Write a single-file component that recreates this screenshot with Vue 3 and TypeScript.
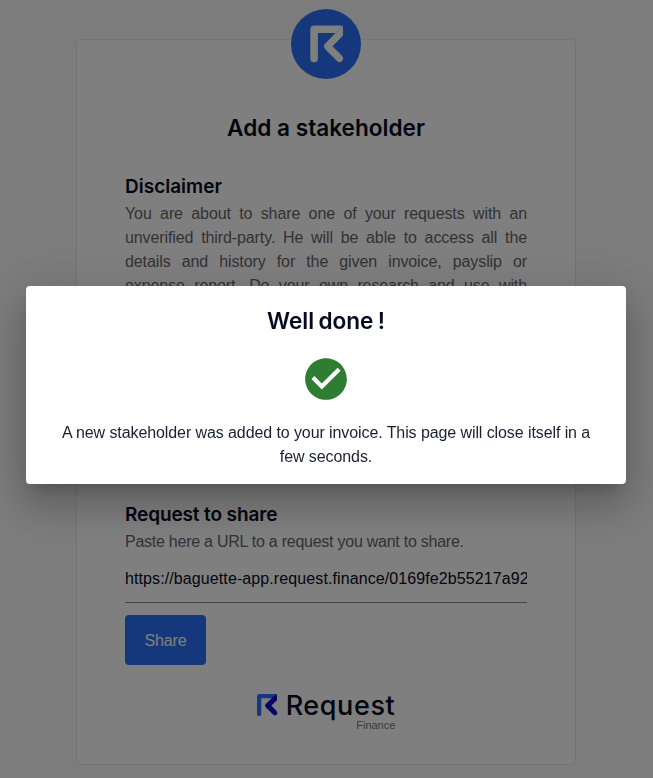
<script setup lang="ts">
import { ref } from 'vue'

const requestUrl = ref<string>('https://baguette-app.request.finance/0169fe2b55217a92')
</script>

<template>
  <div class="page">
    <main class="card">
      <svg class="badge" viewBox="0 0 70 70" aria-hidden="true">
        <circle cx="35" cy="35" r="35" fill="#2b6ff6" />
        <path d="M19.3 49.6V20.6Q19.3 16.5 23.4 16.5H50Q52 16.5 52 18.5L45 24H26.9V49.6A3.8 3.8 0 0 1 19.3 49.6Z" fill="#fff" />
        <path d="M52 17.5V25.6Q52 26.8 51.2 27.6L41.5 37.2L51 46.8C54.4 50.2 49.6 55.5 46 52L34.5 40.5Q31.5 37.3 34.5 34.2L44.8 23.8Z" fill="#fff" />
        <path d="M44.6 24L51.8 16.9" stroke="#9db9f5" stroke-width=".6" />
      </svg>
      <h1>Add a stakeholder</h1>
      <section class="disclaimer">
        <h2>Disclaimer</h2>
        <p>
          <span class="line">You are about to share one of your requests with an</span>
          <span class="line">unverified third-party. He will be able to access all the</span>
          <span class="line">details and history for the given invoice, payslip or</span>
          <span class="line">expense report. Do your own research and use with</span>
        </p>
      </section>
      <section class="share">
        <h2 class="tight">Request to share</h2>
        <p class="hint">Paste here a URL to a request you want to share.</p>
        <div class="field">{{ requestUrl }}</div>
        <button class="submit" type="button">Share</button>
      </section>
      <footer class="brand">
        <svg class="mark" viewBox="0 0 21 22" aria-hidden="true">
          <path d="M0 20V2.2Q0 0 2.2 0H20L16 4.2H4.3V20A2.1 2.1 0 0 1 0 20Z" fill="#2b6ff6" />
          <path d="M20 0V6.2L14.4 11.6L19.3 16.7C22 19.5 18.7 23.2 16 20.5L9 13.5Q7.1 11.6 9 9.7L15.7 3.3Z" fill="#0a0acb" />
        </svg>
        <div class="words">
          <span class="name">Request</span>
          <span class="sub">Finance</span>
        </div>
      </footer>
    </main>
    <div class="overlay">
      <div class="dialog" role="dialog">
        <h2>Well done !</h2>
        <svg class="check" viewBox="0 0 24 24" aria-hidden="true">
          <path fill="#2e7d32" d="M12 2C6.48 2 2 6.48 2 12s4.48 10 10 10 10-4.48 10-10S17.52 2 12 2zm-2 15-5-5 1.41-1.41L10 14.17l7.59-7.59L19 8l-9 9z" />
        </svg>
        <p>A new stakeholder was added to your invoice. This page will close itself in a<br />few seconds.</p>
      </div>
    </div>
  </div>
</template>

<style>
body { margin: 0; }
</style>

<style scoped>
.page {
  box-sizing: border-box;
  height: 778px;
  padding-top: 39px;
  display: flex;
  justify-content: center;
  align-items: flex-start;
  background: #f9f9f9;
  font-family: "Liberation Sans", Arial, sans-serif;
  font-size: 16px;
  line-height: 24px;
  color: #050b20;
  overflow: hidden;
}
h1, h2, p { margin: 0; }
h1, h2 { font-family: Inter, sans-serif; font-weight: 600; }
.card {
  box-sizing: border-box;
  width: 500px;
  height: 726px;
  margin-right: 1px;
  padding: 0 48px;
  display: flex;
  flex-direction: column;
  border: 1px solid #e8e8e8;
  border-radius: 5px;
  background: #fff;
}
.badge {
  width: 70px;
  height: 70px;
  margin-top: -31px;
  align-self: center;
}
h1 {
  margin-top: 33px;
  font-size: 22.6px;
  line-height: 32px;
  text-align: center;
  white-space: nowrap;
}
.disclaimer {
  margin-top: 28px;
  height: 328px;
}
.card h2 {
  font-size: 19px;
  line-height: 30px;
}
.card h2.tight { letter-spacing: -0.12px; }
.disclaimer p, .hint { color: #656565; }
.line {
  display: block;
  white-space: nowrap;
  text-align-last: justify;
  letter-spacing: -0.1px;
}
.hint {
  white-space: nowrap;
  letter-spacing: -0.25px;
}
.field {
  margin-top: 13px;
  height: 35px;
  border-bottom: 1px solid #8c8c8c;
  overflow: hidden;
  white-space: nowrap;
  letter-spacing: 0.1px;
}
.submit {
  display: block;
  margin-top: 12px;
  width: 81px;
  height: 50px;
  padding: 2px 0 0;
  border: 0;
  border-radius: 4px;
  background: #2b6ff6;
  color: #fff;
  font: inherit;
  letter-spacing: -0.1px;
}
.brand {
  margin-top: 29px;
  display: flex;
  justify-content: center;
  gap: 8px;
}
.mark { width: 21px; height: 22px; }
.words { display: flex; flex-direction: column; }
.name {
  font-family: Inter, sans-serif;
  font-size: 27px;
  line-height: 24px;
  font-weight: 550;
  letter-spacing: 0.6px;
}
.sub {
  font-size: 11px;
  line-height: 14px;
  text-align: right;
  color: #737373;
}
.overlay {
  position: fixed;
  inset: 0;
  display: flex;
  justify-content: center;
  align-items: flex-start;
  padding: 286px 1px 0 0;
  background: rgba(0, 0, 0, .5);
}
.dialog {
  box-sizing: border-box;
  width: 600px;
  height: 198px;
  padding: 19px 32px 0;
  display: flex;
  flex-direction: column;
  align-items: center;
  border-radius: 4px;
  background: #fff;
  text-align: center;
  box-shadow: 0 11px 15px -7px rgba(0, 0, 0, .2), 0 24px 38px 3px rgba(0, 0, 0, .14), 0 9px 46px 8px rgba(0, 0, 0, .12);
}
.dialog h2 {
  font-size: 22.6px;
  line-height: 32px;
  word-spacing: -1.4px;
}
.check { width: 50px; height: 50px; margin-top: 17px; }
.dialog p {
  margin-top: 17px;
  white-space: nowrap;
  letter-spacing: -0.09px;
  color: #1a2033;
}
</style>
